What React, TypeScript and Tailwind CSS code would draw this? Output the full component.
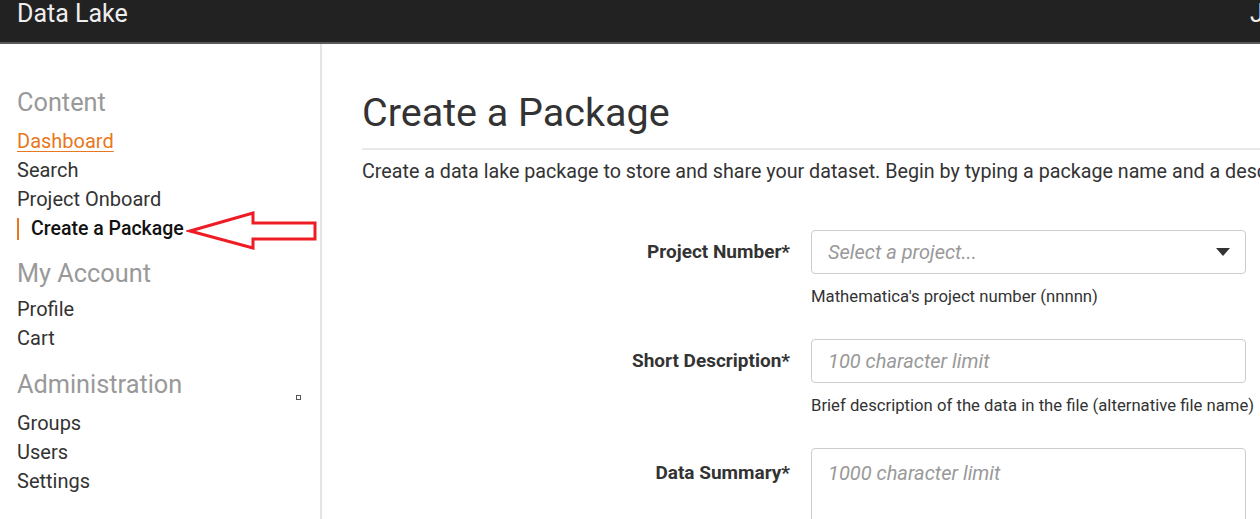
import React from 'react';

type NavItem = { label: string; active?: boolean; current?: boolean };

const sections: { title: string; titleMb: string; mt: string; items: NavItem[] }[] = [
  {
    title: 'Content',
    titleMb: 'mb-[7px]',
    mt: 'mt-0',
    items: [
      { label: 'Dashboard', active: true },
      { label: 'Search' },
      { label: 'Project Onboard' },
      { label: 'Create a Package', current: true },
    ],
  },
  {
    title: 'My Account',
    titleMb: 'mb-[4px]',
    mt: 'mt-[14px]',
    items: [{ label: 'Profile' }, { label: 'Cart' }],
  },
  {
    title: 'Administration',
    titleMb: 'mb-[7px]',
    mt: 'mt-[15px]',
    items: [{ label: 'Groups' }, { label: 'Users' }, { label: 'Settings' }],
  },
];

function Sidebar() {
  return (
    <aside className="relative w-[322px] shrink-0 border-r-2 border-[#e4e4e4] pt-[42px] min-h-[475px]">
      {sections.map((s) => (
        <div key={s.title} className={s.mt}>
          <h2 className={`pl-[17px] text-[25.3px] leading-[34px] text-[#999] ${s.titleMb}`}>{s.title}</h2>
          <ul>
            {s.items.map((it) => (
              <li key={it.label} className="h-[29px] text-[20px] leading-[29px]">
                {it.current ? (
                  <div className="ml-[17px] flex items-center">
                    <span className="h-[22px] w-[2px] bg-[#e87722]" />
                    <span className="pl-[12px] text-[19.5px] font-medium text-[#111]">{it.label}</span>
                  </div>
                ) : (
                  <a
                    className={`pl-[17px] ${
                      it.active ? 'text-[#e87722] underline underline-offset-[3px] decoration-1' : 'text-[#333]'
                    }`}
                  >
                    {it.label}
                  </a>
                )}
              </li>
            ))}
          </ul>
        </div>
      ))}

      {/* annotation arrow */}
      <svg className="absolute left-[186px] top-[166px]" width="134" height="42" viewBox="0 0 134 42">
        <polygon
          points="4,21 67,3 67,13 129,13 129,29 67,29 67,38"
          fill="none"
          stroke="#ee1c25"
          strokeWidth="3"
          strokeLinejoin="miter"
        />
      </svg>

      <span className="absolute left-[296px] top-[351px] h-[5px] w-[5px] border border-[#555]" />
    </aside>
  );
}

function Field({
  label,
  placeholder,
  help,
  select,
  area,
}: {
  label: string;
  placeholder: string;
  help?: string;
  select?: boolean;
  area?: boolean;
}) {
  return (
    <div className="grid grid-cols-[428px_435px] gap-x-[21px]">
      <label className={`flex justify-end text-[19px] font-bold text-[#333] ${area ? 'pt-[11px]' : 'items-center'}`}>
        {label}
      </label>
      <div
        className={`flex justify-between rounded-[4px] border border-[#ccc] bg-white pl-[16px] pr-[15px] ${
          area ? 'h-[90px] items-start pt-[9px]' : 'h-[44px] items-center'
        }`}
      >
        <span className="text-[20px] italic text-[#999]">{placeholder}</span>
        {select && (
          <svg width="14" height="8" viewBox="0 0 14 8">
            <polygon points="0,0 14,0 7,8" fill="#333" />
          </svg>
        )}
      </div>
      {help && (
        <p className="col-start-2 mt-[12px] whitespace-nowrap text-[16.7px] leading-[22px] text-[#333]">{help}</p>
      )}
    </div>
  );
}

export default function App() {
  return (
    <div className="h-[519px] w-[1260px] overflow-hidden bg-white font-['Roboto',sans-serif]">
      <div className="w-[1500px]">
        <header className="flex h-[44px] border-b-2 border-[#5a5a5a] bg-[#222] pt-[1px] text-[25px] leading-none text-[#eee]">
          <div className="w-[1250px] pl-[17px]">Data Lake</div>
          <div>John Smith</div>
        </header>
        <div className="flex">
          <Sidebar />
          <main className="pl-[40px] pt-[46px]">
            <h1 className="text-[39.5px] leading-[46px] text-[#333]">Create a Package</h1>
            <div className="mt-[12px] h-[2px] w-[1100px] bg-[#e8e8e8]" />
            <p className="mt-[8px] whitespace-nowrap text-[19.7px] leading-[27px] text-[#333]">
              Create a data lake package to store and share your dataset. Begin by typing a package name and a
              description of the data.
            </p>
            <div className="mt-[45px] flex flex-col gap-y-[31px]">
              <Field
                label="Project Number*"
                placeholder="Select a project..."
                help="Mathematica's project number (nnnnn)"
                select
              />
              <Field
                label="Short Description*"
                placeholder="100 character limit"
                help="Brief description of the data in the file (alternative file name)"
              />
              <Field label="Data Summary*" placeholder="1000 character limit" area />
            </div>
          </main>
        </div>
      </div>
    </div>
  );
}
